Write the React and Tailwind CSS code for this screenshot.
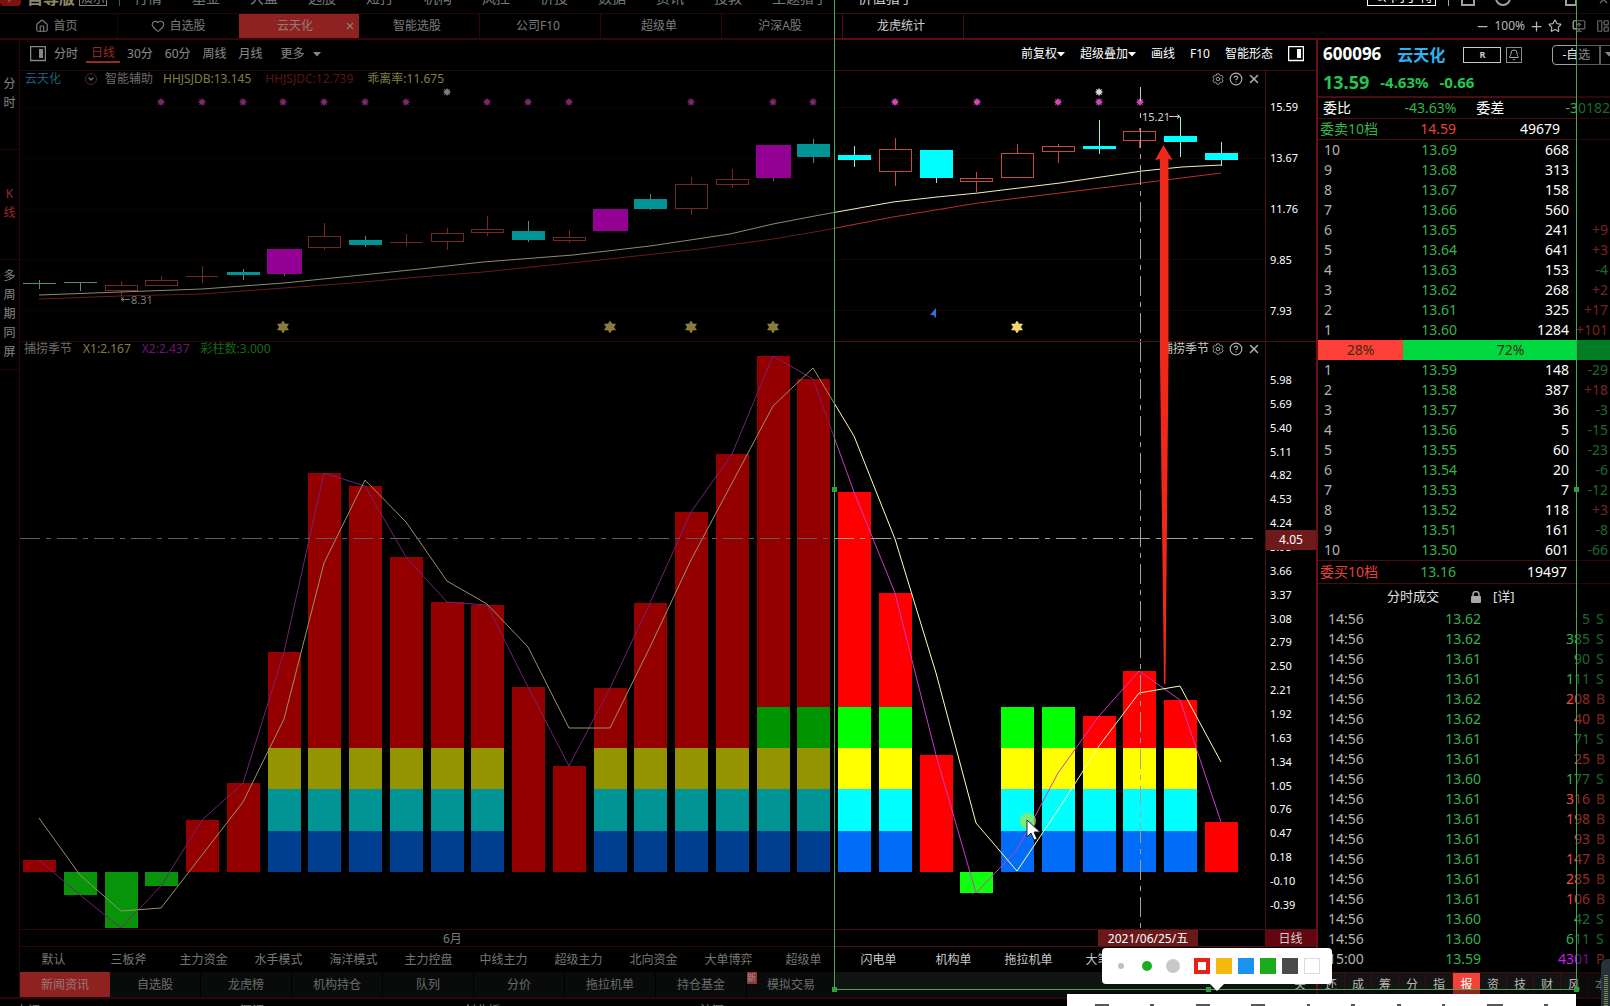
import React from "react";
import { Home, Heart, X, CircleHelp, Minus, Plus, Star, Bell, Search, MonitorUp, LayoutPanelLeft, ChevronDown } from "lucide-react";
import { HiOutlineCog6Tooth } from "react-icons/hi2";

const MENU = ["行情", "基金", "大盘", "选股", "短打", "机构", "风控", "价投", "数据", "资讯", "投教", "主题猎手", "价值猎手"];
const TABS = ["智能选股", "公司F10", "超级单", "沪深A股", "龙虎统计"];
const PERIODS = ["30分", "60分", "周线", "月线"];
const STRATEGIES = ["三板斧", "主力资金", "水手模式", "海洋模式", "主力控盘", "中线主力", "超级主力", "北向资金", "大单博弈", "超级单", "闪电单", "机构单", "拖拉机单", "大笔单"];
const NEWS_TABS = ["自选股", "龙虎榜", "机构持仓", "队列", "分价", "拖拉机单", "持仓基金"];

const PRICE_AXIS = ["15.59", "13.67", "11.76", "9.85", "7.93"];
const INDICATOR_AXIS = [
  "5.98", "5.69", "5.40", "5.11", "4.82", "4.53", "4.24", "3.95", "3.66", "3.37", "3.08", "2.79",
  "2.50", "2.21", "1.92", "1.63", "1.34", "1.05", "0.76", "0.47", "0.18", "-0.10", "-0.39",
];

const SELLS = [
  [10, "13.69", 668, ""], [9, "13.68", 313, ""], [8, "13.67", 158, ""], [7, "13.66", 560, ""], [6, "13.65", 241, "+9"],
  [5, "13.64", 641, "+3"], [4, "13.63", 153, "-4"], [3, "13.62", 268, "+2"], [2, "13.61", 325, "+17"], [1, "13.60", 1284, "+101"],
];
const BUYS = [
  [1, "13.59", 148, "-29"], [2, "13.58", 387, "+18"], [3, "13.57", 36, "-3"], [4, "13.56", 5, "-15"], [5, "13.55", 60, "-23"],
  [6, "13.54", 20, "-6"], [7, "13.53", 7, "-12"], [8, "13.52", 118, "+3"], [9, "13.51", 161, "-8"], [10, "13.50", 601, "-66"],
];
const TRADES = [
  ["14:56", "13.62", 5, "S"], ["14:56", "13.62", 385, "S"], ["14:56", "13.61", 90, "S"], ["14:56", "13.61", 111, "S"],
  ["14:56", "13.62", 208, "B"], ["14:56", "13.62", 40, "B"], ["14:56", "13.61", 71, "S"], ["14:56", "13.61", 25, "B"],
  ["14:56", "13.60", 177, "S"], ["14:56", "13.61", 316, "B"], ["14:56", "13.61", 198, "B"], ["14:56", "13.61", 93, "B"],
  ["14:56", "13.61", 147, "B"], ["14:56", "13.61", 285, "B"], ["14:56", "13.61", 106, "B"], ["14:56", "13.60", 42, "S"],
  ["14:56", "13.60", 611, "S"], ["15:00", "13.59", 4301, "P"],
];

/* kind: c = falling (cyan), r = rising (hollow red), m = highlighted (magenta); then body top/bottom, wick top/bottom */
const CANDLES = [
  ["c", 283, 284, 280, 289], ["c", 282, 283, 282, 291], ["r", 285, 290, 281, 299], ["r", 280, 285, 276, 285],
  ["r", 276, 276, 266, 283], ["c", 272, 275, 269, 280], ["m", 249, 274, 249, 276], ["r", 236, 247, 223, 250],
  ["c", 240, 245, 236, 247], ["r", 242, 242, 234, 246], ["r", 233, 241, 228, 250], ["r", 229, 232, 216, 236],
  ["c", 231, 240, 221, 242], ["r", 237, 240, 230, 243], ["m", 209, 231, 209, 231], ["c", 199, 209, 194, 210],
  ["r", 184, 208, 177, 215], ["r", 179, 184, 169, 188], ["m", 145, 178, 145, 181], ["c", 144, 157, 139, 163],
  ["c", 155, 160, 146, 167], ["r", 149, 171, 138, 186], ["c", 150, 178, 150, 183], ["r", 178, 181, 172, 192],
  ["r", 153, 177, 144, 177], ["r", 146, 151, 144, 163], ["c", 146, 149, 120, 154], ["r", 131, 140, 128, 148],
  ["c", 136, 142, 117, 157], ["c", 153, 160, 142, 166],
];
const BAR_TOPS = [
  860, 895, 928, 886, 820, 783, 652, 473, 486, 557, 602, 605, 687, 766, 688, 603, 512, 454, 356, 379,
  492, 593, 755, 893, 850, 773, 716, 671, 700, 822,
];
const SIGNAL = [
  818, 875, 911, 908, 855, 802, 719, 563, 480, 522, 581, 604, 647, 728, 728, 647, 560, 483, 406, 368,
  436, 539, 673, 823, 871, 810, 746, 693, 686, 762,
];
const STACKED = [6, 7, 8, 9, 10, 11, 14, 15, 16, 17, 18, 19, 20, 21, 24, 25, 26, 27, 28];
const GREEN_TOP = [18, 19, 20, 21, 24, 25];
const BASE = 872;
const cx = (i) => Math.round(39 + i * 40.75);

const FAST_MA = "39,295 120,292 202,289 284,283 352,276 420,269 483,262 573,255 650,246 730,234 773,224 820,215 893,202 937,197 978,193 1060,183 1142,171 1182,167 1221,165";
const SLOW_MA = "39,299 120,296 202,294 284,288 352,283 420,277 483,272 600,260 700,249 773,239 820,231 893,217 978,203 1060,193 1142,183 1221,173";

const MAGENTA_DOTS = [161, 202, 243, 283, 324, 365, 406, 487, 528, 569, 691, 773, 813, 895, 977, 1058, 1099, 1140];
const GOLD_STARS = [283, 610, 691, 773, 1017];

function Burst({ x, y, color }) {
  return (
    <g stroke={color} strokeWidth="1" strokeOpacity="0.7">
      <circle cx={x} cy={y} r="2.5" fill={color} />
      <path d={`M${x - 4} ${y}h8M${x} ${y - 4}v8M${x - 3} ${y - 3}l6 6M${x + 3} ${y - 3}l-6 6`} />
    </g>
  );
}

function HexStar({ x, y }) {
  return (
    <path
      fill="#f5d565"
      stroke="#fff0a8"
      strokeWidth="0.5"
      d={`M${x} ${y - 6}l2 3h3.5l-1.8 3 1.8 3h-3.5l-2 3-2-3h-3.5l1.8-3-1.8-3h3.5z`}
    />
  );
}

function PriceChart() {
  return (
    <svg viewBox="20 71 1245 270" preserveAspectRatio="none" className="block h-full w-full" role="img" aria-label="日线K线图">
      {[107, 158, 209, 259, 310].map((y) => (
        <path key={y} d={`M20 ${y}.5H1265`} stroke="#170505" strokeWidth="1" />
      ))}
      {MAGENTA_DOTS.map((x) => <Burst key={x} x={x} y={102} color="#d048b8" />)}
      <Burst x={447} y={92} color="#d8d8d8" />
      <Burst x={1099} y={92} color="#d8d8d8" />
      {GOLD_STARS.map((x) => <HexStar key={x} x={x} y={327} />)}
      <path d="M930 315l6-7v10l-3-3z" fill="#2f6fe0" />
      {CANDLES.map(([kind, top, bottom, high, low], i) => {
        const x = cx(i);
        const color = kind === "c" ? "#8ff0ea" : kind === "r" ? "#c84844" : "#ff60ff";
        return (
          <g key={i} shapeRendering="crispEdges">
            {kind !== "r" && <path d={`M${x}.5 ${high}V${low}`} stroke={color} />}
            {kind === "r" && <path d={`M${x}.5 ${high}V${top}M${x}.5 ${bottom}V${low}`} stroke={color} />}
            {kind === "c" && <rect x={x - 16} y={top} width="33" height={bottom - top} fill={bottom - top > 1 ? "#00ffff" : "#8ff0ea"} />}
            {kind === "m" && <rect x={x - 17} y={top} width="35" height={bottom - top} fill="#ff00ff" />}
            {kind === "r" && <path d={`M${x - 16} ${top}.5h32v${bottom - top}h-32z`} fill="none" stroke={color} />}
          </g>
        );
      })}
      <polyline points={SLOW_MA} fill="none" stroke="#b83030" strokeWidth="1" />
      <polyline points={FAST_MA} fill="none" stroke="#f0f0c0" strokeWidth="1" />
      <path d="M1140.500 87V101M1140.500 113V118" stroke="#c8c8c8" strokeWidth="1" />
      <path d="M1140.500 128V341" stroke="#a0a0a0" strokeWidth="1" strokeDasharray="20 6 5 6" />
      <path d="M121 299.500h9M121 299.500l3-2M121 299.500l3 2M1169 116.500h11M1180 116.500l-3-2M1180 116.500l-3 2" stroke="#c8c8c8" fill="none" />
      <text x="131" y="304" className="text-[11px]" fill="#d0d0d0">8.31</text>
      <text x="1142" y="121" className="text-[11px]" fill="#d0d0d0">15.21</text>
    </svg>
  );
}

function IndicatorChart() {
  return (
    <svg viewBox="20 342 1245 587" preserveAspectRatio="none" className="block h-full w-full" role="img" aria-label="捕捞季节指标图">
      {BAR_TOPS.map((y, i) => {
        const x = cx(i) - 16;
        const stacked = STACKED.includes(i);
        const green = GREEN_TOP.includes(i);
        const floor = green ? 707 : stacked ? 748 : BASE;
        return (
          <g key={i} shapeRendering="crispEdges">
            {y > BASE && <rect x={x} y={BASE} width="33" height={y - BASE} fill="#0fff0f" />}
            {y < floor && <rect x={x} y={y} width="33" height={floor - y} fill="#ff0000" />}
            {green && <rect x={x} y="707" width="33" height="41" fill="#00ff00" />}
            {stacked && <rect x={x} y="748" width="33" height="41" fill="#ffff00" />}
            {stacked && <rect x={x} y="789" width="33" height="42" fill="#00ffff" />}
            {stacked && <rect x={x} y="831" width="33" height="41" fill="#006cf8" />}
          </g>
        );
      })}
      <polyline points={BAR_TOPS.map((y, i) => `${cx(i)},${y}`).join(" ")} fill="none" stroke="#c83cc8" strokeWidth="1" />
      <polyline points={SIGNAL.map((y, i) => `${cx(i)},${y}`).join(" ")} fill="none" stroke="#ffffb4" strokeWidth="1" />
      <path d="M20 538.500H1253" stroke="#a0a0a0" strokeWidth="1" strokeDasharray="20 6 5 6" />
      <path d="M1140.500 342V929" stroke="#a0a0a0" strokeWidth="1" strokeDasharray="20 6 5 6" />
    </svg>
  );
}

function PanelTools() {
  return (
    <div className="flex items-center gap-1 text-[#b0b0b0]">
      <button aria-label="设置"><HiOutlineCog6Tooth size={14} /></button>
      <button aria-label="帮助"><CircleHelp size={14} strokeWidth={2} /></button>
      <button aria-label="关闭"><X size={14} strokeWidth={2.500} /></button>
    </div>
  );
}

function SidePanelIcon() {
  return (
    <svg width="16" height="16" viewBox="0 0 16 16" aria-hidden="true">
      <rect x="0.500" y="0.500" width="15" height="14" fill="none" stroke="currentColor" strokeWidth="1.500" />
      <rect x="9" y="3" width="4" height="9" fill="currentColor" />
    </svg>
  );
}

const LockIcon = () => (
  <svg width="10" height="12" viewBox="0 0 10 12" aria-hidden="true" className="ml-8">
    <path d="M2 6V3.500a3 3 0 016 0V6" fill="none" stroke="#a8a8a8" strokeWidth="1.500" />
    <rect y="5" width="10" height="7" rx="1" fill="#a8a8a8" />
  </svg>
);

const Caret = () => (
  <svg width="8" height="5" viewBox="0 0 8 5" className="inline-block" aria-hidden="true"><path d="M0 0h8L4 4.500z" fill="currentColor" /></svg>
);

function Book({ rows, label }) {
  return (
    <table aria-label={label} className="w-full table-fixed text-sm leading-5">
      <colgroup>
        <col className="w-[60px]" /><col className="w-[79px]" /><col className="w-[112px]" /><col />
      </colgroup>
      <tbody>
        {rows.map(([level, price, volume, delta]) => (
          <tr key={level} className="h-5">
            <td className="py-0 pl-1.5 text-[#b4b4b4]">{level}</td>
            <td className="py-0 text-right text-[#37b24d]">{price}</td>
            <td className="py-0 text-right text-white">{volume}</td>
            <td className={delta.startsWith("+") ? "py-0 pr-0.5 text-right text-[#c8403c]" : "py-0 pr-0.5 text-right text-[#37b24d]"}>{delta}</td>
          </tr>
        ))}
      </tbody>
    </table>
  );
}

const SIDE_COLOR = { S: "text-[#37b24d]", B: "text-[#f04a44]", P: "text-[#c81ee6]" };

function QuotePanel() {
  return (
    <aside className="flex w-[292px] shrink-0 flex-col overflow-hidden whitespace-nowrap">
      <div className="flex h-[31px] items-center pb-0.5 pl-[5px]">
        <h1 className="text-[17px] font-bold text-white">600096</h1>
        <span className="ml-4 text-base font-bold text-[#2fb4f0]">云天化</span>
        <button className="ml-[18px] h-4 w-[38px] shrink-0 border border-[#c8c8c8] text-[9px] leading-3 font-bold text-[#c8c8c8]">R</button>
        <button aria-label="提醒" className="ml-[5px] flex size-4 shrink-0 items-center justify-center border border-[#8c8c8c] text-[#a8a8a8]"><Bell size={12} /></button>
        <button className="ml-[30px] h-5 w-12 shrink-0 rounded-l-sm border border-[#a0a0a0] text-xs leading-4 text-[#e8e8e8]">-自选</button>
        <button aria-label="更多自选" className="h-5 w-5 shrink-0 border border-[#a0a0a0] pb-1 pl-1 text-left text-[#e8e8e8]"><Caret /></button>
      </div>
      <div className="flex h-[25px] items-center gap-[11px] pb-[3px] pl-[5px] font-bold text-[#24c552]">
        <span className="text-lg leading-6">13.59</span>
        <span className="text-[15px]">-4.63%</span>
        <span className="text-[15px]">-0.66</span>
      </div>
      <div className="flex h-[23px] items-center border-t-2 border-b border-[#4a0c10] pl-[5px] text-sm leading-5">
        <span className="w-[62px] text-white">委比</span>
        <span className="w-[73px] text-right text-[#37b24d]">-43.63%</span>
        <span className="w-[90px] pl-5 text-white">委差</span>
        <span className="pl-5 text-[#37b24d]">-30182</span>
      </div>
      <div className="flex h-[21px] items-center border-b border-[#4a0c10] pl-0.5 text-sm leading-5">
        <span className="w-[60px] text-[#37b24d]">委卖10档</span>
        <span className="w-[76px] text-right text-[#e8403c]">14.59</span>
        <span className="w-[104px] text-right text-white">49679</span>
      </div>
      <Book rows={SELLS} label="委卖" />
      <div className="flex h-5 text-center text-sm leading-5 text-[#3c2a10]">
        <span className="w-[85px] bg-[#ff4038]">28%</span>
        <span className="flex-1 bg-[#00d840]"><span className="pl-2">72%</span></span>
      </div>
      <Book rows={BUYS} label="委买" />
      <div className="flex h-[24px] items-center border-y border-[#4a0c10] pl-0.5 text-sm leading-5">
        <span className="w-[60px] text-[#e8403c]">委买10档</span>
        <span className="w-[76px] text-right text-[#37b24d]">13.16</span>
        <span className="w-[111px] text-right text-white">19497</span>
      </div>
      <div className="flex h-[25px] items-center pl-[69px] text-[13px] text-[#e0e0e0]">
        <h2>分时成交</h2>
        <LockIcon />
        <a href="#detail" className="ml-3">[详]</a>
      </div>
      <table aria-label="分时成交" className="w-full table-fixed text-sm leading-5">
        <colgroup>
          <col className="w-[80px]" /><col className="w-[83px]" /><col className="w-[109px]" /><col />
        </colgroup>
        <tbody>
          {TRADES.map(([time, price, volume, side], i) => (
            <tr key={i} className="h-5">
              <td className="py-0 pl-2.5 text-[#b4b4b4]">{time}</td>
              <td className="py-0 text-right text-[#37b24d]">{price}</td>
              <td className={`py-0 text-right ${SIDE_COLOR[side]}`}>{volume}</td>
              <td className={`py-0 pl-1.5 ${side === "S" ? "text-[#37b24d]" : "text-[#c8403c]"}`}>{side}</td>
            </tr>
          ))}
        </tbody>
      </table>
      <nav className="mt-auto flex h-[25px] shrink-0 border-t border-[#4a0c10] bg-[#141414] text-xs text-[#b8b8b8]">
        {["还", "成", "筹", "分", "指", "报", "资", "技", "财", "风", "本"].map((t) => (
          <button
            key={t}
            className={t === "报" ? "w-[27px] shrink-0 bg-[#f04438] text-white" : "w-[27px] shrink-0 border-r border-[#3a1014]"}
          >
            {t}
          </button>
        ))}
      </nav>
    </aside>
  );
}

const RAIL = [
  { label: "分时", color: "text-[#e0e0e0]" },
  { label: "K线", color: "text-[#ff4a44]" },
  { label: "多周期同屏", color: "text-[#e0e0e0]" },
];

const SWATCHES = ["bg-[#f5b90f]", "bg-[#1a93f0]", "bg-[#1aad19]", "bg-[#4a4a4a]", "bg-white border border-[#dcdcdc]"];

function CaptureOverlay() {
  const handle = "absolute size-[5px] bg-[#2f9e3f]";
  return (
    <div className="pointer-events-none absolute inset-0 overflow-hidden">
      <div className="absolute -top-4 right-[33px] bottom-4 left-[834px] border border-[#4aa455] shadow-[0_0_0_2000px_rgba(0,0,0,0.42)]">
        <span className={`${handle} top-1/2 -left-[3px]`} />
        <span className={`${handle} top-1/2 -right-[3px]`} />
        <span className={`${handle} -bottom-[3px] -left-[3px]`} />
        <span className={`${handle} -bottom-[3px] left-1/2`} />
        <span className={`${handle} -right-[3px] -bottom-[3px]`} />
      </div>
      <div className="pointer-events-auto absolute right-[278px] bottom-[22px] flex h-9 w-[230px] items-center rounded-sm bg-white pl-4">
        <button aria-label="细" className="size-1.5 rounded-full bg-[#c0c0c0]" />
        <button aria-label="中" className="ml-[18px] size-2.5 rounded-full bg-[#1aad19]" />
        <button aria-label="粗" className="ml-3.5 size-3.5 rounded-full bg-[#c8c8c8]" />
        <button aria-label="红色" className="ml-3.5 flex size-4 items-center justify-center bg-[#e8201a]"><span className="size-2 bg-white" /></button>
        {SWATCHES.map((c) => <button key={c} aria-label="颜色" className={`ml-1.5 size-4 ${c}`} />)}
        <svg width="14" height="7" viewBox="0 0 14 7" className="absolute top-full left-[108px]" aria-hidden="true"><path d="M0 0h14L7 7z" fill="#fff" /></svg>
      </div>
      <div className="absolute right-[34px] bottom-0 flex h-3 w-[509px] items-end justify-between overflow-hidden bg-white px-7">
        {[14, 4, 14, 14, 3, 4, 4, 3, 16, 4].map((w, i) => (
          <span key={i} className="h-0.5 bg-[#585858]" style={{ width: w }} />
        ))}
      </div>
      <svg width="9" height="47" viewBox="0 0 9 47" className="absolute right-0 bottom-0" aria-hidden="true">
        <path d="M0 47V6a6 6 0 016-6h3v47z" fill="#26313a" />
        <path d="M5 16V47" stroke="#7d8a4a" strokeWidth="4" strokeDasharray="1 1" />
      </svg>
    </div>
  );
}

export default function App() {
  return (
    <div className="relative flex h-screen min-h-[1006px] flex-col overflow-hidden bg-black font-['Noto_Sans','Noto_Sans_CJK_SC',sans-serif] text-xs text-[#d0d0d0]">
      <header className="flex h-[14px] shrink-0 items-end overflow-hidden border-b border-[#3a1012] pb-[7px] text-sm leading-4 whitespace-nowrap">
        <svg width="21" height="20" viewBox="0 0 21 20" aria-hidden="true">
          <rect width="21" height="20" rx="4" fill="#d81e1e" />
          <path d="M12 3l-6 8h4l-2 6 7-8h-4z" fill="#ffe0a0" />
        </svg>
        <span className="ml-1.5 text-base leading-4 font-bold text-[#f5e6c0]">自尊版</span>
        <span className="ml-1 border border-[#e0e0e0] px-px text-xs leading-3">演示</span>
        <span className="ml-3 h-4 w-px bg-[#8c8c8c]" />
        <nav className="ml-3.5 flex gap-[30px]">
          {MENU.map((m) => <a key={m} href="#menu">{m}</a>)}
        </nav>
        <div className="ml-auto flex shrink-0 items-end gap-3">
          <button className="flex h-5 w-[69px] items-center gap-1 border border-white pl-1.5 text-white"><Search size={13} />问小特</button>
          <span className="h-4 w-px bg-[#a0a0a0]" />
          <span className="h-4 w-3.5 border-2 border-[#a0a0a0]" />
          <span className="ml-2 size-4 rounded-full border-2 border-[#a0a0a0]" />
          <span className="ml-[42px] h-4 w-3 border-2 border-[#a0a0a0]" />
          <X size={13} className="ml-2" />
        </div>
      </header>

      <div className="flex h-[26px] shrink-0 items-stretch border-b-2 border-[#5a0c12] text-xs whitespace-nowrap">
        <a href="#home" className="flex w-[118px] items-center justify-center gap-1 border-r border-[#32080c] pr-1"><Home size={14} />首页</a>
        <a href="#watch" className="flex w-[121px] items-center justify-center gap-1"><Heart size={14} />自选股</a>
        <div className="flex w-[120px] items-center bg-[#f43c37] text-[#ffd0c8]">
          <a href="#stock" className="flex-1 pl-1.5 text-center">云天化</a>
          <button aria-label="关闭标签" className="mr-1"><X size={10} strokeWidth={3} /></button>
        </div>
        {TABS.map((t) => (
          <a key={t} href="#tab" className="flex w-[121px] items-center justify-center border-r border-[#4a0c14] pr-1">{t}</a>
        ))}
        <div className="ml-auto flex items-center gap-1 text-[#b8b8b8]">
          <button aria-label="缩小"><Minus size={15} /></button>
          <span>100%</span>
          <button aria-label="放大"><Plus size={15} /></button>
          <button aria-label="收藏"><Star size={14} /></button>
          <button aria-label="投屏" className="ml-1.5"><MonitorUp size={14} /></button>
          <button aria-label="布局" className="ml-1.5"><LayoutPanelLeft size={14} /></button>
        </div>
      </div>

      <div className="flex min-h-0 flex-1">
        <nav className="w-5 shrink-0 border-r border-[#4a0c10]">
          {RAIL.map(({ label, color }) => (
            <button key={label} className={`flex h-[110px] w-full flex-col items-center justify-center border-b border-[#3a0a0e] pb-[3px] text-xs leading-[19px] ${color}`}>
              {[...label].map((c) => <span key={c}>{c}</span>)}
            </button>
          ))}
        </nav>

        <main className="flex min-w-0 flex-1 flex-col border-r-2 border-[#6a1016]">
          <div className="flex h-[31px] shrink-0 items-center border-b border-[#3a1014] pr-3 pb-0.5 pl-[10px] whitespace-nowrap text-[#e8e8e8]">
            <button aria-label="侧栏"><SidePanelIcon /></button>
            <button className="ml-2">分时</button>
            <button className="ml-2 border-b-2 border-[#ff4a44] px-[5px] text-[#ff4a44]">日线</button>
            <div className="ml-[7px] flex gap-3">
              {PERIODS.map((p) => <button key={p}>{p}</button>)}
            </div>
            <button className="ml-[18px] flex items-center gap-2">更多 <Caret /></button>
            <div className="ml-auto flex items-center gap-[15px] text-white">
              <button className="flex items-center">前复权<Caret /></button>
              <button className="flex items-center">超级叠加<Caret /></button>
              <button>画线</button>
              <button>F10</button>
              <button>智能形态</button>
              <button aria-label="右侧栏"><SidePanelIcon /></button>
            </div>
          </div>

          <div className="flex min-h-0 flex-1">
            <div className="relative flex min-w-0 flex-1 flex-col">
              <section className="relative min-h-0 flex-[270] border-b border-[#4a1014]">
                <PriceChart />
                <div className="absolute inset-x-0 top-0 flex h-4 items-center justify-between pr-1 pl-[5px] whitespace-nowrap">
                  <div className="flex items-center">
                    <span className="text-[#2ea0c8]">云天化</span>
                    <button aria-label="展开" className="mx-2 ml-6 flex size-3 items-center justify-center rounded-full border border-[#8c3c30] text-[#c8c8c8]"><ChevronDown size={8} strokeWidth={4} /></button>
                    <span className="text-[#b8b8b8]">智能辅助</span>
                    <span className="ml-2.5 text-[#d8d878]">HHJSJDB:13.145</span>
                    <span className="ml-3.5 text-[#a02020]">HHJSJDC:12.739</span>
                    <span className="ml-3.5 text-[#d8d878]">乖离率:11.675</span>
                  </div>
                  <PanelTools />
                </div>
              </section>
              <section className="relative min-h-0 flex-[587]">
                <IndicatorChart />
                <div className="absolute inset-x-0 top-0 flex h-[14px] items-center justify-between pr-1 pl-1 whitespace-nowrap">
                  <div className="flex items-center gap-[11px]">
                    <span className="text-[#b8b8b8]">捕捞季节</span>
                    <span className="text-[#d8d878]">X1:2.167</span>
                    <span className="text-[#b428c8]">X2:2.437</span>
                    <span className="text-[#28b428]">彩柱数:3.000</span>
                  </div>
                  <div className="flex items-center gap-0.5">
                    <span className="text-[#c8c8c8]">捕捞季节</span>
                    <PanelTools />
                  </div>
                </div>
              </section>
              <svg viewBox="20 71 1245 858" preserveAspectRatio="none" className="pointer-events-none absolute inset-0 h-full w-full" aria-hidden="true">
                <path d="M1163.500 145l9 15-4-1 0 200-3 325h-1.500l-4-325V159l-5 1z" fill="#f0281a" />
                <circle cx="1028" cy="821" r="8" fill="#a0e650" fillOpacity="0.750" />
                <path d="M1027 820v17l4-4 3 7 3-1-3-7h6z" fill="#fff" stroke="#14283c" strokeWidth="1" />
              </svg>
            </div>
            <div className="flex w-[51px] shrink-0 flex-col border-l border-[#4a1014] text-[11px] leading-4 text-white">
              <div className="min-h-0 flex-[270] border-b border-[#4a1014]">
                <ol className="flex h-full flex-col justify-between pt-7 pb-[22px] pl-1">
                  {PRICE_AXIS.map((v) => <li key={v}>{v}</li>)}
                </ol>
              </div>
              <div className="relative min-h-0 flex-[587]">
                <ol className="flex h-full flex-col justify-between pt-[30px] pb-4 pl-1">
                  {INDICATOR_AXIS.map((v) => <li key={v}>{v}</li>)}
                </ol>
                <span className="absolute inset-x-0 top-[32%] h-5 bg-[#6e1a1a] text-center text-xs leading-5">4.05</span>
              </div>
            </div>
          </div>

          <div className="flex h-[18px] shrink-0 border-y border-[#4a1014] text-xs leading-[18px]">
            <span className="flex-1 pl-[423px]">6月</span>
            <span className="w-[100px] bg-[#6a1818] text-center text-white">2021/06/25/五</span>
            <span className="ml-[67px] w-[51px] bg-[#64060f] text-center">日线</span>
          </div>
          <nav className="flex h-[25px] shrink-0 items-center overflow-hidden text-xs whitespace-nowrap text-[#c8c8c8]">
            <button className="w-[71px] shrink-0 pr-1">默认</button>
            {STRATEGIES.map((s) => <button key={s} className="w-[75px] shrink-0">{s}</button>)}
          </nav>
          <nav className="flex h-[25px] shrink-0 bg-[#0f1412] text-xs whitespace-nowrap text-[#b8b8b8]">
            <button className="w-[90px] bg-[#f43c37] text-[#ffd0c8]">新闻资讯</button>
            {NEWS_TABS.map((t) => <button key={t} className="w-[91px] border-r border-black">{t}</button>)}
            <span className="h-3 w-2.5 bg-[#f45c5c] text-[9px] leading-3 text-white">新</span>
            <button className="ml-2.5">模拟交易</button>
            <button className="mr-2.5 ml-auto">关</button>
          </nav>
        </main>

        <QuotePanel />
      </div>

      <footer className="flex h-[9px] shrink-0 gap-[200px] overflow-hidden border-t-2 border-[#4a0c10] pt-1 pl-4 text-xs leading-4 whitespace-nowrap">
        <span>上证</span>
        <span>深证</span>
        <span>创业板</span>
        <span>沪深</span>
      </footer>

      <CaptureOverlay />
    </div>
  );
}
